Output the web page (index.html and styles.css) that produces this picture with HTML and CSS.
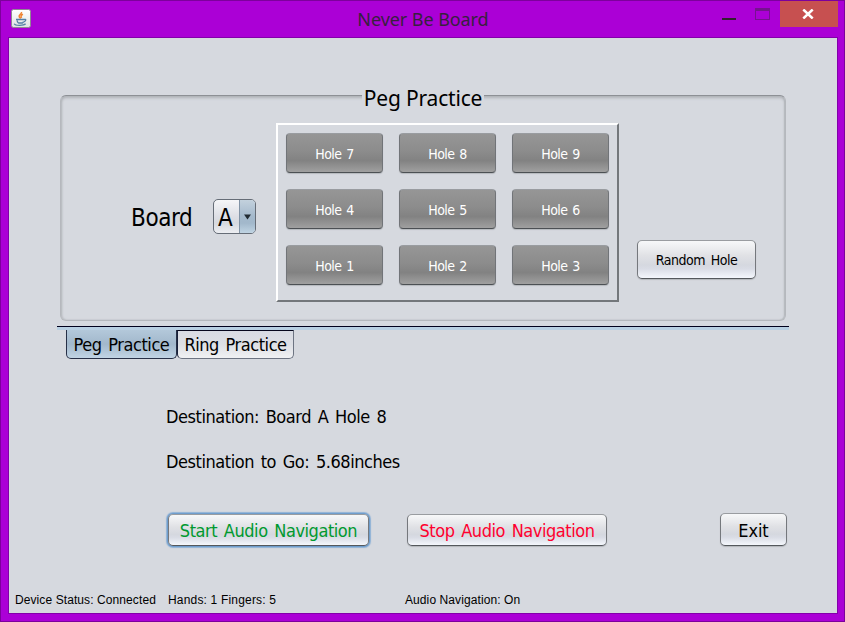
FILE: index.html
```html
<!DOCTYPE html>
<html lang="en">
<head>
<meta charset="utf-8">
<title>Never Be Board</title>
<link rel="stylesheet" href="styles.css">
</head>
<body>
<div class="window">
  <header class="titlebar">
    <svg class="app-icon" width="20" height="19" viewBox="0 0 20 19">
      <defs><linearGradient id="tile" x1="0" y1="0" x2="0" y2="1"><stop offset="0" stop-color="#fff"/><stop offset="1" stop-color="#dfe3e3"/></linearGradient></defs>
      <rect x=".5" y=".5" width="19" height="18" rx="2" fill="url(#tile)" stroke="#8f8793"/>
      <path d="M10.500 3c.6 2-3.2 2.800-2.300 4.700.3.800 1 1.300 1.500 1.900M12 5.300c-2 .8-2.500 1.800-1.400 3.500" fill="none" stroke="#ef8431" stroke-width="1.500"/>
      <path d="M5 10.500h8M6 11.500c.5 1.500 1 2.300 1.500 2.500h4c.6-.3.800-.8 1-1.500M13 10.500c2.500-.7 2.300 1.500 0 2.300M3.200 14.700c1 2.200 9.600 2 11.400.1" fill="none" stroke="#5481a5" stroke-width="1.300"/>
    </svg>
    <h1 class="title"><span>Never Be Board</span></h1>
    <div class="controls">
      <span class="minimize"></span>
      <span class="maximize"></span>
      <button class="close"><svg width="12" height="10" viewBox="0 0 12 10"><path d="M1.300.5 10.700 9.500M10.700.5 1.300 9.500" stroke="#fff" stroke-width="2.500"/></svg></button>
    </div>
  </header>
  <main class="content">
    <section class="group">
      <h2 class="legend"><span>Peg Practice</span></h2>
      <div class="group-body">
        <label class="board-label"><span>Board</span></label>
        <div class="combo"><span class="combo-value">A</span><span class="combo-arrow"><svg width="7" height="6"><path d="M0 .5h7L3.500 5.500z" fill="#222b33"/></svg></span></div>
        <div class="holes">
          <button class="hole"><span>Hole 7</span></button><button class="hole"><span>Hole 8</span></button><button class="hole"><span>Hole 9</span></button>
          <button class="hole"><span>Hole 4</span></button><button class="hole"><span>Hole 5</span></button><button class="hole"><span>Hole 6</span></button>
          <button class="hole"><span>Hole 1</span></button><button class="hole"><span>Hole 2</span></button><button class="hole"><span>Hole 3</span></button>
        </div>
        <button class="btn random"><span>Random Hole</span></button>
      </div>
    </section>
    <nav class="tabs">
      <div class="tab active"><span>Peg Practice</span></div>
      <div class="tab"><span>Ring Practice</span></div>
    </nav>
    <section class="info">
      <p><span>Destination: Board A Hole 8</span></p>
      <p><span>Destination to Go: 5.68inches</span></p>
    </section>
    <div class="actions">
      <button class="btn start"><span>Start Audio Navigation</span></button>
      <button class="btn stop"><span>Stop Audio Navigation</span></button>
      <button class="btn exit"><span>Exit</span></button>
    </div>
    <footer class="status">
      <span class="device">Device Status: Connected</span>
      <span class="hands">Hands: 1 Fingers: 5</span>
      <span>Audio Navigation: On</span>
    </footer>
  </main>
</div>
</body>
</html>
```
FILE: styles.css
```css
* { box-sizing: border-box; margin: 0; padding: 0; }
body { width: 845px; height: 622px; overflow: hidden; font-family: "DejaVu Sans Condensed", "DejaVu Sans", sans-serif; font-stretch: condensed; color: #000; }
span { white-space: nowrap; }
button { font: inherit; }
.window { width: 845px; height: 622px; padding: 0 7px 8px 8px; background: #ab00d6; box-shadow: inset 0 0 0 1px #7d009c; display: flex; flex-direction: column; }
.titlebar { height: 37px; display: grid; grid-template-columns: 120px 1fr 120px; flex: none; }
.app-icon { margin: 9px 0 0 3px; }
.title { font: 400 18px/38px "Noto Sans", sans-serif; letter-spacing: -.07px; text-align: center; color: #37203d; }
.controls { display: flex; align-items: flex-start; justify-content: flex-end; padding-top: 1px; }
.minimize { width: 14px; height: 2px; background: #30212d; margin: 17px 19px 0 0; }
.maximize { width: 15px; height: 12px; border: 1px solid #76128f; border-top-width: 3px; margin: 7px 10px 0 0; }
.close { width: 58px; height: 26px; border: 0; background: #c75050; display: flex; align-items: center; justify-content: center; padding-right: 2px; }
.content { flex: 1; border: 1px solid #8300aa; background: #d6d9df; display: flex; flex-direction: column; padding-top: 57px; }
.group { width: 726px; height: 226px; margin-left: 51px; flex: none; border: 1px solid #b5b8bd; border-top: 1px solid #8d9095; border-radius: 6px; box-shadow: inset 0 2px 3px #b0b3b8, inset 1px 0 2px #babdc2, inset -1px 0 1px #babdc2; }
.legend { width: 122px; height: 26px; margin: -11px auto 0; background: #d6d9df; font: 400 21px/27px "Noto Sans", sans-serif; letter-spacing: -.17px; display: flex; justify-content: center; }
.group-body { display: flex; padding-top: 12px; }
.board-label { width: 82px; margin: 78px 0 0 70px; font-size: 24px; line-height: 34px; letter-spacing: -.4px; }
.combo { width: 43px; height: 35px; margin-top: 76px; border: 1px solid #666d77; border-radius: 5px; overflow: hidden; display: flex; background: linear-gradient(#f5f6f8, #dddfe5 50%, #d6d9df 70%, #eceef2); }
.combo-value { width: 25px; padding-right: 2px; text-align: center; font-size: 24px; line-height: 36px; }
.combo-arrow { flex: 1; display: flex; align-items: center; justify-content: center; border-left: 1px solid #8193a5; background: linear-gradient(#c3d1dd, #a4b9cc 50%, #a2b8cb 70%, #c0d4e3); }
.holes { width: 343px; height: 179px; margin-left: 20px; padding: 8px; display: grid; grid-template-columns: repeat(3, 97px); grid-auto-rows: 40px; gap: 16px; border: 2px solid #fff; border-right-color: #73777b; border-bottom-color: #73777b; }
.hole { border: 1px solid #717478; border-top-color: #999ca0; border-bottom-color: #4c5054; border-radius: 4px; background: linear-gradient(#969696, #8c8c8c 45%, #828282 70%, #a0a0a0); box-shadow: 0 1px 1px #b5b8bd; color: #fff; font-size: 14px; line-height: 38px; padding-top: 1px; letter-spacing: -.6px; word-spacing: 1.5px; }
.btn { border: 1px solid #75787d; border-top-color: #999ca0; border-bottom-color: #54585c; border-radius: 5px; background: linear-gradient(#f7f8f9, #e0e1e5 40%, #d5d8df 65%, #d9dce5 75%, #f4f7fc); box-shadow: 0 1px 1px #b3b6bb; display: flex; align-items: center; justify-content: center; letter-spacing: -.45px; word-spacing: 2px; }
.random { width: 119px; height: 39px; margin: 117px 0 0 18px; font-size: 14px; }
.tabs { width: 732px; height: 33px; margin: 5px 0 0 48px; flex: none; border-top: 1px solid #00001c; display: flex; padding: 0 9px; background: linear-gradient(#b8cfe2, #b8cfe2) top / 100% 3px no-repeat; }
.tab { width: 117px; height: 29px; margin-top: 3px; border: 1px solid #6d7482; border-top: 1px solid #06071c; border-left-color: #172039; border-radius: 0 0 5px 5px; background: linear-gradient(#d8dbe3, #dddfe4 50%, #f0f1f3); display: flex; align-items: center; justify-content: center; font-size: 18px; letter-spacing: -.45px; word-spacing: 2px; }
.tab.active { width: 111px; border: 1px solid #273047; border-top: 0; background: linear-gradient(#b3c8da, #a2b8cc 50%, #c1d4e4); }
.info { margin: 45px 0 0 157px; font-size: 18px; letter-spacing: -.45px; word-spacing: 2px; }
.info p { height: 45px; line-height: 26px; }
.actions { display: flex; margin: 19px 0 0 159px; font-size: 18px; align-items: flex-start; height: 36px; }
.start { width: 201px; height: 32px; margin-top: 1px; color: #00992f; box-shadow: 0 0 0 1px #6f9dcc, 0 0 1px 2px #8fb2d6; }
.stop { width: 200px; height: 32px; margin: 1px 0 0 38px; color: #ff002f; }
.exit { width: 67px; height: 33px; margin-left: 113px; padding-top: 2px; letter-spacing: -.1px; }
.status { display: flex; margin: 44px 0 0 6px; font: 12px/14px "Liberation Sans", sans-serif; letter-spacing: .09px; }
.device { width: 153px; }
.hands { width: 237px; letter-spacing: .18px; }
```
